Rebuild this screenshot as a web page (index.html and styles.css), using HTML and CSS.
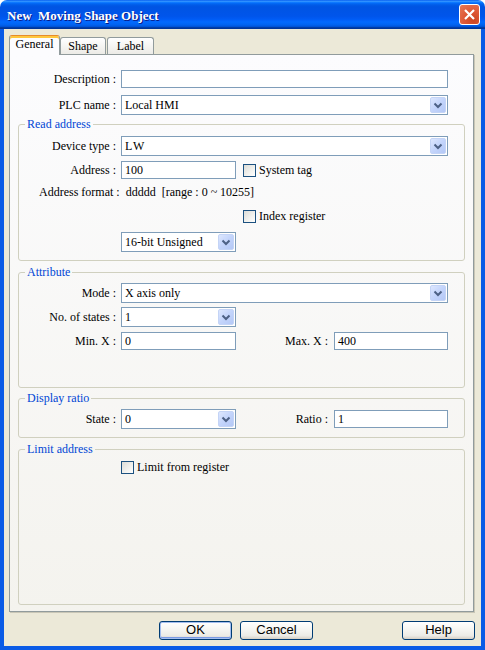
FILE: index.html
```html
<!DOCTYPE html>
<html>
<head>
<meta charset="utf-8">
<link rel="stylesheet" href="styles.css">
</head>
<body>
<div class="window">
  <div class="titlebar">
    <span class="title">New&nbsp; Moving Shape Object</span>
    <div class="close">
      <svg width="11" height="11" viewBox="0 0 11 11"><path d="M1 1 L10 10 M10 1 L1 10" stroke="#fff" stroke-width="2.2" fill="none"/></svg>
    </div>
  </div>
  <div class="frame">
    <div class="tabs">
      <div class="tab active t-general">General</div>
      <div class="tab t-shape">Shape</div>
      <div class="tab t-label">Label</div>
    </div>
    <div class="panel">
      <div class="row"><span class="lbl">Description :</span><div class="edit full"></div></div>
      <div class="row mt7"><span class="lbl">PLC name :</span>
        <div class="combo full"><span class="val">Local HMI</span><span class="drop"><svg width="16" height="16" viewBox="0 0 16 16"><path d="M4.5 6.5 L8 10 L11.5 6.5" stroke="#4D6185" stroke-width="2" fill="none"/></svg></span></div>
      </div>

      <fieldset class="group g-read">
        <legend>Read address</legend>
        <div class="row"><span class="lbl">Device type :</span>
          <div class="combo full"><span class="val lw">LW</span><span class="drop"><svg width="16" height="16" viewBox="0 0 16 16"><path d="M4.5 6.5 L8 10 L11.5 6.5" stroke="#4D6185" stroke-width="2" fill="none"/></svg></span></div>
        </div>
        <div class="row mt5"><span class="lbl">Address :</span><div class="edit short">100</div>
          <span class="chk sys"></span><span class="chklbl">System tag</span>
        </div>
        <div class="fmt">Address format :  ddddd  [range : 0 ~ 10255]</div>
        <div class="row idx"><span class="chk"></span><span class="chklbl">Index register</span></div>
        <div class="row bit">
          <div class="combo short"><span class="val">16-bit Unsigned</span><span class="drop"><svg width="16" height="16" viewBox="0 0 16 16"><path d="M4.5 6.5 L8 10 L11.5 6.5" stroke="#4D6185" stroke-width="2" fill="none"/></svg></span></div>
        </div>
      </fieldset>

      <fieldset class="group g-attr">
        <legend>Attribute</legend>
        <div class="row"><span class="lbl">Mode :</span>
          <div class="combo full"><span class="val">X axis only</span><span class="drop"><svg width="16" height="16" viewBox="0 0 16 16"><path d="M4.5 6.5 L8 10 L11.5 6.5" stroke="#4D6185" stroke-width="2" fill="none"/></svg></span></div>
        </div>
        <div class="row mt4"><span class="lbl">No. of states :</span>
          <div class="combo short"><span class="val">1</span><span class="drop"><svg width="16" height="16" viewBox="0 0 16 16"><path d="M4.5 6.5 L8 10 L11.5 6.5" stroke="#4D6185" stroke-width="2" fill="none"/></svg></span></div>
        </div>
        <div class="row mt5"><span class="lbl">Min. X :</span><div class="edit short">0</div>
          <span class="lbl2">Max. X :</span><div class="edit half">400</div>
        </div>
      </fieldset>

      <fieldset class="group g-ratio">
        <legend>Display ratio</legend>
        <div class="row"><span class="lbl">State :</span>
          <div class="combo short"><span class="val">0</span><span class="drop"><svg width="16" height="16" viewBox="0 0 16 16"><path d="M4.5 6.5 L8 10 L11.5 6.5" stroke="#4D6185" stroke-width="2" fill="none"/></svg></span></div>
          <span class="lbl2">Ratio :</span><div class="edit half">1</div>
        </div>
      </fieldset>

      <fieldset class="group g-limit">
        <legend>Limit address</legend>
        <div class="row lim"><span class="chk"></span><span class="chklbl">Limit from register</span></div>
      </fieldset>
    </div>
    <div class="buttons">
      <div class="btn default">OK</div>
      <div class="btn cancel">Cancel</div>
      <div class="btn help">Help</div>
    </div>
  </div>
</div>
</body>
</html>
```
FILE: styles.css
```css
* { box-sizing: border-box; }
body {
  margin: 0;
  background: #ffffff;
  font-family: "Liberation Serif", "Times New Roman", serif;
  font-size: 12px;
  color: #000;
}
.window {
  width: 485px;
  height: 650px;
  display: flex;
  flex-direction: column;
}
.titlebar {
  height: 29px;
  flex: none;
  border-radius: 7px 7px 0 0;
  background: linear-gradient(to bottom, #0058EE 0%, #3593FF 4%, #288EFF 6%, #127DFF 8%, #036FFC 10%, #0262EE 14%, #0057E5 20%, #0054E3 24%, #0055EB 56%, #005BF5 66%, #026AFE 76%, #0062EF 86%, #0052D6 92%, #0040AB 94%, #003092 100%);
  display: flex;
  align-items: center;
  padding: 0 5px 0 7px;
}
.title {
  flex: 1;
  color: #fff;
  font-weight: bold;
  font-size: 13px;
  padding-top: 3px;
  text-shadow: 1px 1px 0 #0A1883;
  white-space: nowrap;
}
.close {
  width: 21px;
  height: 21px;
  border: 1px solid #fff;
  border-radius: 3px;
  background: radial-gradient(circle at 70% 80%, #CC4622 0%, #DD5533 40%, #E77A58 100%);
  display: flex;
  align-items: center;
  justify-content: center;
  margin-top: -1px;
}
.close svg { display: block; }

.frame {
  flex: 1;
  display: flex;
  flex-direction: column;
  background: #ECE9D8;
  border: 4px solid #0A5BE6;
  border-top: 0;
}
.tabs {
  display: flex;
  align-items: flex-end;
  height: 19px;
  margin: 6px 0 0 5px;
  position: relative;
  z-index: 1;
}
.tab {
  height: 17px;
  border: 1px solid #919B9C;
  border-bottom: 0;
  border-radius: 3px 3px 0 0;
  background: linear-gradient(to bottom, #FFFFFF, #ECEBE6);
  text-align: center;
  line-height: 14px;
  padding-top: 1px;
}
.tab.active {
  height: 20px;
  margin-bottom: -1px;
  background: #FCFCFE;
  border-top: 1px solid #E68B2C;
  box-shadow: inset 0 2px 0 #FFC73C;
  line-height: 16px;
  padding-top: 0;
}
.t-general { width: 51px; }
.t-shape { width: 46px; }
.t-label { width: 47px; margin-left: 1px; }

.panel {
  flex: 1;
  margin: 0 7px 0 5px;
  border: 1px solid #919B9C;
  background: linear-gradient(to bottom, #FCFCFE, #F4F3EE);
  box-shadow: 1px 1px 0 #C9C6B6;
  display: flex;
  flex-direction: column;
  padding: 15px 25px 0 0;
}
.row {
  display: flex;
  align-items: center;
}
.mt7 { margin-top: 7px; }
.mt5 { margin-top: 5px; }
.mt4 { margin-top: 4px; }
.lbl {
  width: 106px;
  margin-right: 5px;
  text-align: right;
  white-space: nowrap;
}
.group .lbl { width: 97px; }
.lbl2 {
  flex: 1;
  text-align: right;
  margin-right: 6px;
  white-space: nowrap;
}
.edit {
  height: 18px;
  border: 1px solid #7F9DB9;
  background: #fff;
  padding-left: 3px;
  line-height: 16px;
  white-space: nowrap;
}
.combo {
  height: 20px;
  border: 1px solid #7F9DB9;
  background: #fff;
  display: flex;
  align-items: center;
  padding: 1px;
}
.combo .val {
  flex: 1;
  padding-left: 2px;
  white-space: nowrap;
}
.val.lw { letter-spacing: 1.5px; }
.drop {
  width: 16px;
  height: 16px;
  border: 1px solid #C4D4F6;
  border-radius: 2px;
  background: linear-gradient(135deg, #DDE7FE 0%, #C3D4FB 50%, #B4C8F6 100%);
  display: flex;
  align-items: center;
  justify-content: center;
}
.drop svg { display: block; flex: none; }
.full { width: 327px; }
.short { width: 115px; }
.half { width: 114px; }

.chk {
  width: 13px;
  height: 13px;
  flex: none;
  border: 1px solid #1C5180;
  background: linear-gradient(135deg, #DCDCD7 0%, #F2F2EF 60%, #FFFFFF 100%);
}
.chklbl { margin-left: 3px; white-space: nowrap; }
.sys { margin-left: 7px; }

.group {
  margin: 0 -17px 0 8px;
  border: 1px solid #D0D0BF;
  border-radius: 3px;
  padding: 0 16px 0 0;
  min-width: 0;
}
.group legend {
  color: #0046D5;
  line-height: 14px;
  padding: 0 2px;
  margin-left: 6px;
}
.g-read { margin-top: 2px; padding-top: 5px; padding-bottom: 8px; }
.fmt {
  margin-top: 6px;
  line-height: 14px;
  padding-left: 20px;
  white-space: pre;
}
.idx { margin-top: 10px; padding-left: 224px; height: 14px; }
.bit { margin-top: 9px; padding-left: 102px; }
.g-attr { margin-top: 4px; padding-top: 4px; padding-bottom: 37px; }
.g-ratio { margin-top: 3px; padding-top: 4px; padding-bottom: 8px; }
.g-limit { margin-top: 4px; padding-top: 4px; flex: 1; margin-bottom: 6px; }
.lim { padding-left: 102px; height: 14px; }

.buttons {
  display: flex;
  height: 19px;
  margin: 9px 0 6px 0;
  padding-right: 6px;
  font-family: "Liberation Sans", Arial, sans-serif;
  font-size: 13px;
}
.btn {
  width: 73px;
  height: 19px;
  border: 1px solid #003C74;
  border-radius: 3px;
  background: linear-gradient(to bottom, #FFFFFF 0%, #F4F4F0 50%, #ECEBE6 80%, #D6D0C5 100%);
  text-align: center;
  line-height: 15px;
}
.btn.default {
  margin-left: 155px;
  box-shadow: inset 0 0 0 1px #A4BEEF, inset 0 -1px 0 1px #7A9AE4;
}
.btn.cancel { margin-left: 8px; }
.btn.help { margin-left: auto; }
```
